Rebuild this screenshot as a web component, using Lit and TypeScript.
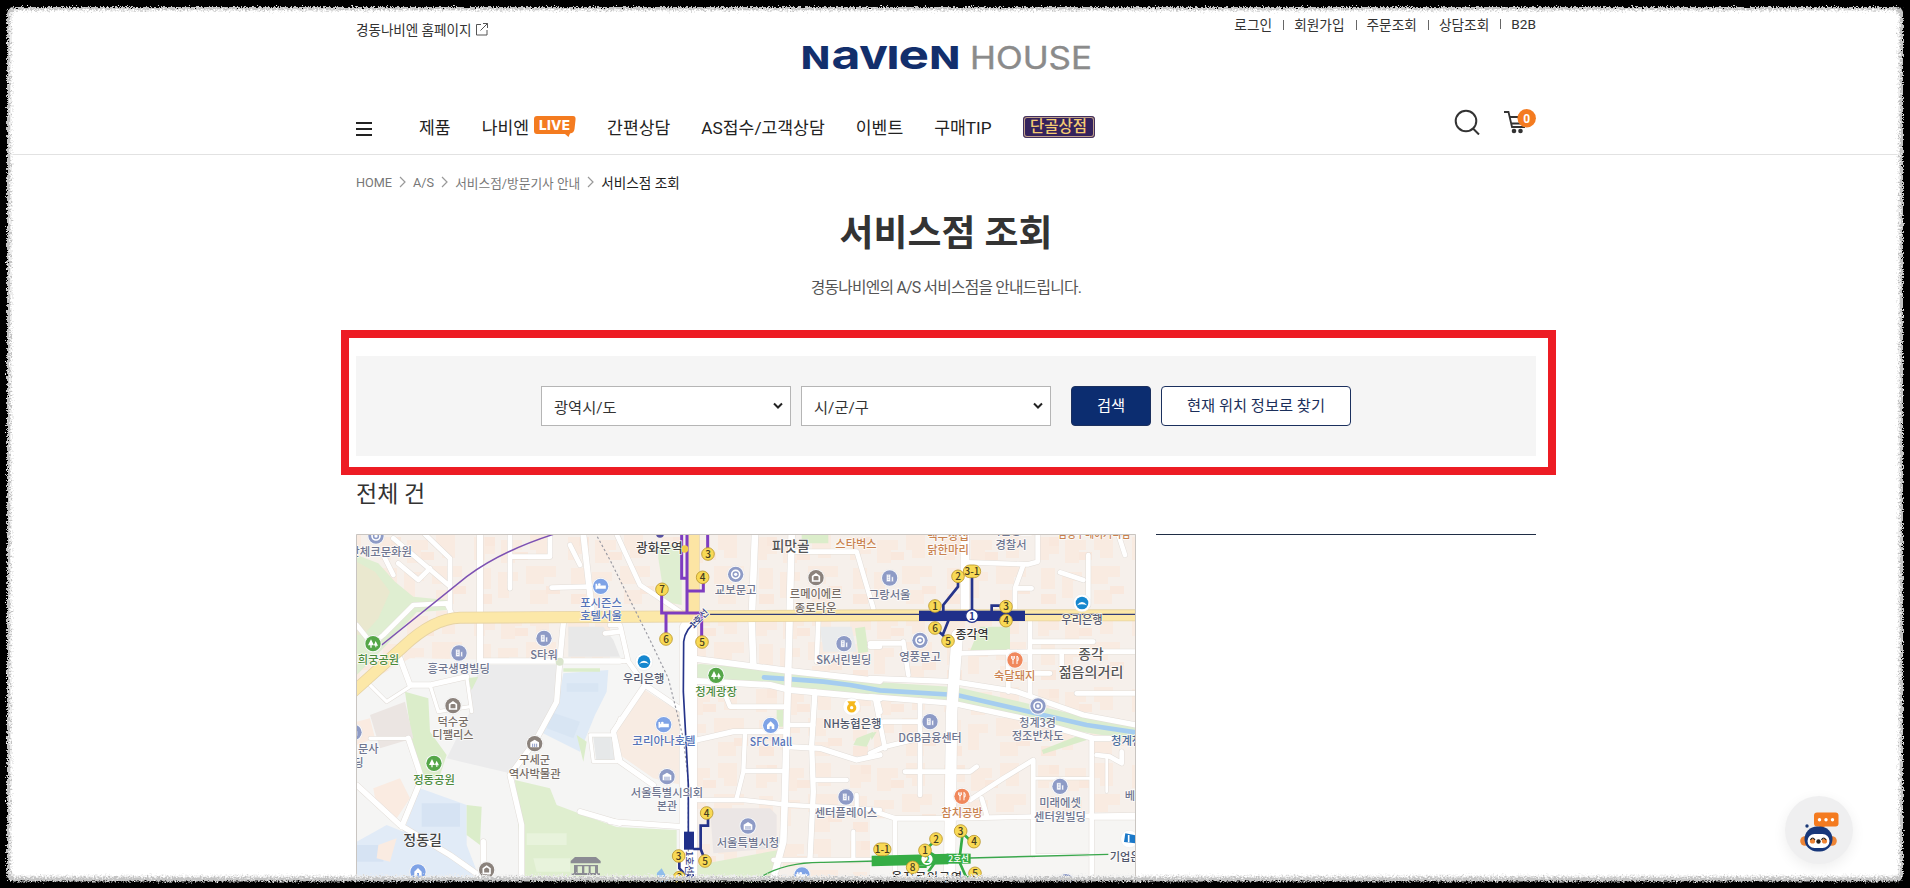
import { LitElement, html, css, svg } from "lit";
import { customElement } from "lit/decorators.js";

type Kind = "building" | "hotel" | "mall" | "park" | "museum" | "house" | "food" | "ring" | "bank" | "nh" | "ibk" | "none";
// Map tiles are authored on a 3x grid; each one is shifted by its own origin.
const ORIGIN: Record<string, number> = { a: 350, b: 610, c: 870 };
const tile = (t: string) => `translate(${ORIGIN[t]} 525) scale(.33333)`;

interface Place { t: string; k: Kind; x: number; y: number; c: string; s?: number; w?: number; lines: [string, number, number, number?][]; }

const SLATE = "#6f7690", BROWN = "#776d66", GREEN = "#4b8a3c", BLUE = "#5674b8", ORANGE = "#c9824f", DARK = "#444";

const PLACES: Place[] = [
  { t: "a", k: "ring", x: 78, y: 33, c: SLATE, lines: [["단체코문화원", 92, 92, 188]] },
  { t: "a", k: "hotel", x: 752, y: 184, c: BLUE, lines: [["포시즌스", 753, 245, 125], ["호텔서울", 753, 285, 125]] },
  { t: "a", k: "park", x: 69, y: 356, c: GREEN, lines: [["경희궁공원", 70, 418, 155]] },
  { t: "a", k: "building", x: 327, y: 384, c: SLATE, lines: [["흥국생명빌딩", 326, 445, 187]] },
  { t: "a", k: "building", x: 582, y: 340, c: SLATE, lines: [["S타워", 582, 402, 82]] },
  { t: "a", k: "house", x: 309, y: 542, c: BROWN, lines: [["덕수궁", 309, 603, 93], ["디팰리스", 309, 643, 124]] },
  { t: "a", k: "museum", x: 554, y: 656, c: BROWN, lines: [["구세군", 554, 717, 93], ["역사박물관", 554, 758, 156]] },
  { t: "a", k: "park", x: 252, y: 715, c: GREEN, lines: [["정동공원", 252, 777, 125]] },
  { t: "a", k: "building", x: 12, y: 622, c: SLATE, lines: [["문사", 55, 683, 62], ["딩", 25, 725, 31]] },
  { t: "a", k: "none", x: 0, y: 0, c: DARK, s: 42, lines: [["정동길", 218, 961, 116]] },
  { t: "a", k: "mall", x: 204, y: 1041, c: BLUE, lines: [] },
  { t: "a", k: "house", x: 410, y: 1035, c: BROWN, lines: [] },
  { t: "b", k: "none", x: 0, y: 0, c: DARK, s: 38, lines: [["광화문역", 148, 80, 140]] },
  { t: "b", k: "none", x: 0, y: 0, c: "#555", s: 42, lines: [["피맛골", 542, 78, 114]] },
  { t: "b", k: "none", x: 0, y: 0, c: ORANGE, lines: [["스타벅스", 738, 70, 124]] },
  { t: "b", k: "ring", x: 377, y: 148, c: SLATE, lines: [["교보문고", 377, 208, 125]] },
  { t: "b", k: "house", x: 618, y: 158, c: BROWN, lines: [["르메이에르", 617, 219, 155], ["종로타운", 617, 261, 125]] },
  { t: "b", k: "building", x: 702, y: 356, c: SLATE, lines: [["SK서린빌딩", 701, 417, 165]] },
  { t: "b", k: "bank", x: 102, y: 410, c: "#555a70", lines: [["우리은행", 101, 473, 124]] },
  { t: "b", k: "park", x: 318, y: 451, c: GREEN, lines: [["청계광장", 318, 513, 125]] },
  { t: "b", k: "nh", x: 725, y: 545, c: "#50576b", lines: [["NH농협은행", 727, 609, 175]] },
  { t: "b", k: "hotel", x: 161, y: 599, c: BLUE, lines: [["코리아나호텔", 162, 660, 190]] },
  { t: "b", k: "mall", x: 482, y: 601, c: BLUE, lines: [["SFC Mall", 483, 662, 127]] },
  { t: "b", k: "museum", x: 171, y: 755, c: SLATE, lines: [["서울특별시의회", 171, 815, 217], ["본관", 171, 856, 60]] },
  { t: "b", k: "building", x: 708, y: 816, c: SLATE, lines: [["센터플레이스", 708, 877, 188]] },
  { t: "b", k: "museum", x: 414, y: 903, c: SLATE, lines: [["서울특별시청", 414, 965, 188]] },
  { t: "b", k: "hotel", x: 576, y: 1050, c: BLUE, lines: [] },
  { t: "c", k: "none", x: 0, y: 0, c: ORANGE, lines: [["백부장집", 234, 46, 125], ["닭한마리", 234, 87, 125]] },
  { t: "c", k: "none", x: 0, y: 0, c: SLATE, lines: [["서울종로", 423, 30, 124], ["경찰서", 423, 71, 93]] },
  { t: "c", k: "none", x: 0, y: 0, c: ORANGE, lines: [["김영주베이커리점", 672, 38, 218]] },
  { t: "c", k: "building", x: 59, y: 159, c: SLATE, lines: [["그랑서울", 59, 221, 125]] },
  { t: "c", k: "ring", x: 150, y: 346, c: SLATE, lines: [["영풍문고", 150, 407, 125]] },
  { t: "c", k: "bank", x: 636, y: 234, c: "#555a70", lines: [["우리은행", 636, 298, 124]] },
  { t: "c", k: "none", x: 0, y: 0, c: "#555", s: 40, lines: [["종각", 663, 403, 76], ["젊음의거리", 663, 456, 194]] },
  { t: "c", k: "food", x: 435, y: 405, c: ORANGE, lines: [["숙달돼지", 434, 466, 124]] },
  { t: "c", k: "ring", x: 504, y: 543, c: SLATE, lines: [["청계3경", 503, 605, 110], ["정조반차도", 503, 646, 156]] },
  { t: "c", k: "building", x: 180, y: 590, c: SLATE, lines: [["DGB금융센터", 180, 650, 190]] },
  { t: "c", k: "none", x: 0, y: 0, c: "#4a6d9c", lines: [["청계천", 770, 659, 94]] },
  { t: "c", k: "food", x: 276, y: 814, c: ORANGE, lines: [["참치공방", 276, 875, 124]] },
  { t: "c", k: "building", x: 570, y: 784, c: SLATE, lines: [["미래에셋", 570, 845, 125], ["센터원빌딩", 570, 887, 156]] },
  { t: "c", k: "none", x: 0, y: 0, c: SLATE, lines: [["베어", 795, 826, 62]] },
  { t: "c", k: "ibk", x: 778, y: 942, c: "#50576b", lines: [["기업은행", 781, 1007, 124]] },
  { t: "c", k: "building", x: 588, y: 1070, c: BLUE, lines: [] },
];

const AREAS: [string, string, string][] = [
  ["a", "#f5f5f4", "M20 490L180 400L810 410V1089H20Z"],
  ["b", "#f6f6f5", "M0 290H215V1089H0Z"],
  ["c", "#f6f5f3", "M0 880H797V1089H0Z"],
  ["b", "#f8ece3", "M105 495L215 565V780L130 760L30 690L20 620Z"],
  ["a", "#dfeed1", "M20 90L85 115L135 170L190 215L290 225V255L200 262L100 370L20 450Z"],
  ["a", "#eae8cf", "M20 110L75 140L120 200L85 280L40 330L20 330Z"],
  ["a", "#ebebec", "M395 420H620V520L560 640L480 745L290 700L360 560V500Z"],
  ["a", "#e8e8e8", "M655 305H760L790 345L810 395H655Z"],
  ["a", "#dfeaf6", "M640 445L775 435L770 500L735 570L690 680L570 620L625 530Z"],
  ["a", "#d8e5f3", "M650 475H745V500H650ZM600 560L690 590L670 640L590 610Z"],
  ["a", "#e1ebf7", "M210 790L350 840V960L400 1089H20V950L110 900L160 920Z"],
  ["a", "#d6e3f3", "M215 835H330V905H215ZM20 960H100V1010H20Z"],
  ["a", "#dbedca", "M165 500L235 520L240 620L290 690L270 750L215 780L185 640Z"],
  ["a", "#dbedca", "M350 840L395 845L390 960L350 930ZM350 460L385 455L365 495Z"],
  ["a", "#dfeecf", "M495 765L600 790L620 840L700 870L810 910V1089H520Z"],
  ["a", "#e8f3dc", "M530 925H650V960H530ZM550 1000H660V1040H560Z"],
  ["a", "#ebe5e2", "M60 570L165 530L190 640L90 670Z"],
  ["a", "#faebe1", "M20 590L60 580L75 640L20 660ZM70 790L150 760L180 820L140 880L80 850ZM85 960L140 940L120 1010L80 1000Z"],
  ["a", "#dbedca", "M680 630L710 650L700 710ZM640 430H750V440H640Z"],
  ["a", "#e6e8e9", "M730 635H790L800 700L740 715Z"],
  ["b", "#dfeed1", "M145 100V60H215V240L165 230Z"],
  ["b", "#dbedca", "M575 28H655V55H575ZM735 310L765 305L775 380L745 385ZM500 555H520V605H500ZM740 640L790 620L770 665L730 660Z"],
  ["b", "#e9ebec", "M630 305H725L740 380H640ZM0 610L20 690L0 710Z"],
  ["b", "#dfeecf", "M0 905L200 915V1089H0ZM262 1020L505 975L480 1089H262Z"],
  ["b", "#ebe6e5", "M300 850L480 850L500 870V970L310 985Z"],
  ["c", "#d9ecc9", "M330 305H420V375L300 378ZM515 675L630 630L650 645L520 687ZM0 625L20 620L5 645Z"],
];

const ROADS: [string, number, string][] = [
  ["a", 18, "M390 28V420M700 28L725 250"],
  ["a", 14, "M300 265V100L225 28M480 28V190M480 95H600V28M305 265L290 235L190 240L100 330L75 350M605 188L720 185M660 60L690 120M130 40L295 180M145 115L205 165L240 130M100 90L130 150M810 320L765 325M20 300L60 350"],
  ["a", 16, "M640 295L630 400L620 530L555 650L480 750L515 900V1089M390 408H810M150 400L180 480H240L350 455"],
  ["a", 10, "M350 455L365 560M60 480L110 530L180 485M240 480L265 560M720 630H790L800 710H730ZM810 580L790 630M60 640L175 640M265 560L360 545"],
  ["a", 16, "M20 780L150 900L300 990L400 1060M175 640L215 760L155 905M400 950V1060M690 860L810 895"],
  ["b", 20, "M435 28L425 290L430 420M545 28L535 430L525 800L520 950L490 1060"],
  ["b", 14, "M0 408H45M0 300L30 300L55 410L105 480M20 28L90 180L210 260M560 80H740L790 250M625 290L620 410M340 495L360 545H530M530 600H610M810 365H780"],
  ["b", 18, "M260 402L540 438L810 468M260 468L480 480L540 495L810 520"],
  ["b", 16, "M105 480L10 620L30 710L130 780M105 480L230 565M0 890L215 905M260 645L370 620H530M615 500L605 660L610 800L600 1000M530 665L630 670L740 705L810 690M800 520L810 560"],
  ["b", 13, "M405 630L400 740L380 820M400 738H525M262 825H400L540 840L810 855M610 765H710M490 1005H790M730 920V1000M740 860V810"],
  ["b", 52, "M235 310V1089"],
  ["c", 34, "M262 330L245 560L238 1089"],
  ["c", 26, "M285 28V250"],
  ["c", 14, "M290 112L475 118L503 110V28M460 120L435 190V250M435 190H485M570 142L640 165M655 90V240M745 28L765 90M480 290V510M480 350H670M480 380H797M265 385L480 380M480 445H540M620 505H797M575 380V440M415 380V500"],
  ["c", 16, "M0 460L250 470L440 500L640 570L797 600M0 515L250 535L460 580L670 640L720 640"],
  ["c", 14, "M150 525V810M15 520L45 670M0 685L45 665L150 640M40 590H150M105 740H300L320 725M300 825L400 760L490 705V990M665 640V1089M680 690L720 695L755 715V680M0 855L75 880H240L500 875L797 870M335 820L350 870M75 880V1060M100 350L115 450M0 355H100"],
  ["c", 8, "M490 760H665M490 990H665M670 880H797M710 695V800"],
];

const EXITS: [string, number, number, string, number?][] = [
  ["b", 294, 87, "3"], ["b", 278, 157, "4"], ["b", 156, 193, "7"], ["b", 168, 342, "6"], ["b", 276, 351, "5"],
  ["b", 290, 864, "4"], ["b", 206, 993, "3"], ["b", 285, 1008, "5"], ["b", 208, 1058, "2"],
  ["c", 264, 154, "2"], ["c", 306, 139, "3-1", 52], ["c", 195, 243, "1"], ["c", 408, 245, "3"], ["c", 408, 287, "4"],
  ["c", 195, 309, "6"], ["c", 234, 348, "5"], ["c", 272, 918, "3"], ["c", 312, 950, "4"], ["c", 198, 942, "2"],
  ["c", 165, 976, "1"], ["c", 37, 973, "1-1", 52], ["c", 128, 1027, "8"], ["c", 315, 1045, "5"],
];

const PIN: Record<Kind, string> = {
  building: "#8e9bc6", hotel: "#7fa3e6", mall: "#7fa3e6", park: "#55a648", museum: "#8e9bc6", house: "#8b827c",
  food: "#f0885c", ring: "#8e9bc6", bank: "#fff", nh: "#fff", ibk: "#fff", none: "",
};

const glyph = (k: Kind) => {
  switch (k) {
    case "building": return svg`<path d="M-10 11V-11H3V11ZM5 -4H11V11H5ZM-6 -6H-1M-6 -1H-1M-6 4H-1" fill="#fff" stroke="#8e9bc6" stroke-width="2"/>`;
    case "hotel": return svg`<path d="M-13 -8V9M-13 5H13V0H-13" stroke="#fff" stroke-width="5" fill="none"/><circle cx="-4" cy="-5" r="4" fill="#fff"/>`;
    case "mall": return svg`<path d="M-11 11V-1L0 -12L11 -1V11Z" fill="#fff"/><path d="M-3 11V3H3V11" fill="#7fa3e6"/>`;
    case "park": return svg`<path d="M-6 -13L-15 5H-8V12H-4V5H3ZM8 -8L3 3L5 6H7V11H10V6H15Z" fill="#fff"/>`;
    case "museum": return svg`<path d="M-13 -4L0 -12L13 -4V11H-13Z" fill="#fff"/><path d="M-6 0V10M0 0V10M6 0V10" stroke="#8e9bc6" stroke-width="3"/>`;
    case "house": return svg`<path d="M-10 10V-4L0 -11L10 -4V10Z" fill="none" stroke="#fff" stroke-width="5"/>`;
    case "food": return svg`<path d="M-6 -12V12M-10 -12V-4Q-6 2 -2 -4V-12M6 12V-12Q12 -8 9 2H6" stroke="#fff" stroke-width="3" fill="none"/>`;
    case "ring": return svg`<circle r="12" fill="none" stroke="#fff" stroke-width="5"/><circle r="5" fill="#fff"/>`;
    case "bank": return svg`<circle r="19" fill="#1687cf"/><path d="M-15 7Q0 -13 15 7Q0 0 -15 7Z" fill="#fff"/>`;
    case "nh": return svg`<path d="M-13 -16H13L8 -8A14 14 0 1 1 -8 -8Z" fill="#f5b81c"/><circle cy="3" r="5" fill="#fff"/>`;
    case "ibk": return svg`<path d="M-12 -17L18 -11V13L-16 9Z" fill="#1a78c8"/><path d="M-2 -12V10" stroke="#fff" stroke-width="5"/>`;
    default: return "";
  }
};

@customElement("station-map")
class StationMap extends LitElement {
  static styles = css`
    :host { display: block; }
    svg { display: block; }
    text { font-family: "Noto Sans CJK KR", sans-serif; }
    .label { font-weight: 500; paint-order: stroke; stroke: #fff; stroke-width: 5px; stroke-opacity: .8; stroke-linejoin: round; text-anchor: middle; }
    .num { font-weight: 500; font-size: 30px; text-anchor: middle; fill: #443c20; }
    .road { fill: none; stroke-linejoin: round; stroke-linecap: round; }
  `;
  render() {
    const line = (t: string, d: string, c: string, w: number) => svg`<path class="road" transform=${tile(t)} d=${d} stroke=${c} stroke-width=${w}/>`;
    return html`<svg width="780" height="354" viewBox="356 534 780 354">
      <defs>
        <pattern id="blocks" width="94" height="76" patternUnits="userSpaceOnUse">
          <rect width="94" height="76" fill="#f6f0eb"/>
          <path d="M4 5H25V22H15V28H4ZM31 8H52V18H45V31H31ZM60 3H79V26H66V18H60ZM7 36H21V57H7ZM28 40H48V49H39V66H28ZM56 34H86V45H74V52H56ZM60 58H78V72H60Z" fill="#f9ebe1"/>
          <path d="M15 5H25V14H15ZM45 20H58V28H45ZM76 54H90V62H76ZM7 62H22V72H7Z" fill="#f9e8dd"/>
        </pattern>
      </defs>
      <rect x="356" y="534" width="780" height="354" fill="url(#blocks)"/>
      ${AREAS.map(([t, c, d]) => svg`<path transform=${tile(t)} fill=${c} d=${d}/>`)}
      ${line("b", "M270 440L540 462L810 495L1040 510L1270 563L1430 600L1577 622", "#dcedd0", 46)}
      ${line("b", "M462 457L560 464L640 470L720 480L810 496L1040 510L1270 563L1430 600L1577 622", "#a5cdf0", 14)}
      ${ROADS.map(([t, w, d]) => line(t, d, "#e2ddd8", w + 3))}
      ${ROADS.map(([t, w, d]) => line(t, d, "#ffffff", w))}
      ${line("a", "M10 500L160 365Q250 280 330 278L1600 271H2380", "#e6d3a4", 36)}
      ${line("b", "M252 10V270", "#e6d3a4", 34)}
      ${line("a", "M10 500L160 365Q250 280 330 278L1600 271H2380", "#fce8a8", 31)}
      ${line("b", "M252 10V270", "#fce5a4", 30)}
      <g transform=${tile("a")}>
        <path d="M95 360L350 155Q450 80 610 28" fill="none" stroke="#7d51b3" stroke-width="4.5"/>
        <circle cx="629" cy="410" r="12" fill="#d9e4cc"/>
        <path d="M662 1008L675 996H738L752 1008V1015H662ZM672 1020H744V1045H672ZM664 1045H750V1050H664Z" fill="#8b8b93"/>
        <path d="M683 1024H696V1044H683ZM703 1024H716V1044H703ZM722 1024H735V1044H722Z" fill="#dfeecf"/>
      </g>
      <g transform=${tile("b")} fill="none">
        <path d="M-38 35L0 105L120 345L175 460L220 640L235 770V1089" stroke="#9a9aa2" stroke-width="3.5" stroke-dasharray="7 7"/>
        <path d="M215 28V160H231M231 28V265M234 198H280V155M293 28V85M155 195V264H275V345M168 264V340" stroke="#7e3cc0" stroke-width="9"/>
        <path d="M300 268H1577" stroke="#333d78" stroke-width="4"/>
        <path d="M268 282Q225 310 221 350L220 500L235 780V925" stroke="#26348a" stroke-width="5"/>
        <path d="M294 865V902H272V972H250M272 972L285 1005M208 995V1030L235 1058" stroke="#26348a" stroke-width="8"/>
        <rect x="222" y="920" width="30" height="54" fill="#20308a"/><rect x="228" y="1048" width="24" height="42" fill="#20308a"/>
        <path d="M420 1080Q500 1010 640 1012L800 1008" stroke="#3aa74c" stroke-width="4"/>
        <path d="M140 1045L155 1030L180 1075H145Z" fill="#8fbdeb"/>
        <circle cx="150" cy="26" r="12" fill="#5751a0"/><circle cx="224" cy="72" r="11" fill="#f0cc4b"/>
        <g transform="translate(274 288) rotate(-45)"><text class="label" fill="#344184" font-size="28">1호선</text></g>
        <g transform="translate(228 1012) rotate(90)"><text class="label" fill="#344184" font-size="28">1호선</text></g>
      </g>
      <g transform=${tile("c")} fill="none">
        <path d="M264 160V185L220 240V260M306 155V260M408 242H365V260M236 285L218 330L195 310M218 330L234 345" stroke="#26348a" stroke-width="8"/>
        <rect x="147" y="257" width="318" height="31" fill="#20308a"/>
        <circle cx="306" cy="273" r="19" fill="#fff" stroke="#20308a" stroke-width="4"/>
        <path d="M270 990L278 925L310 955M198 945L165 975M175 980L205 998L175 1040M268 1010L290 1060L312 1045M130 1025H170" stroke="#35ab45" stroke-width="8"/>
        <path d="M5 992L235 986V1018L5 1024Z" fill="#35ad45"/>
        <path d="M300 999L715 988" stroke="#3aa74c" stroke-width="4"/>
        <circle cx="171" cy="1003" r="19" fill="#fff" stroke="#35ad45" stroke-width="4"/>
        <rect x="230" y="986" width="72" height="30" fill="#35ad45"/>
        <text x="266" y="1011" text-anchor="middle" font-size="26" fill="#fff" font-weight="500">2호선</text>
        <text x="306" y="284" text-anchor="middle" font-size="30" fill="#26348a" font-weight="700">1</text>
        <text x="171" y="1013" text-anchor="middle" font-size="28" fill="#35ad45" font-weight="700">2</text>
        <text class="label" x="306" y="341" font-size="36" fill="#333">종각역</text>
      </g>
      ${PLACES.map((p) => svg`<g transform=${tile(p.t)}>
        ${p.k === "none" ? "" : svg`<g transform="translate(${p.x} ${p.y})"><circle r="26" fill="#fff" stroke="#ddd" stroke-width="1"/><circle r="23" fill=${p.k === "museum" && p.c === BROWN ? "#8b827c" : PIN[p.k]}/>${glyph(p.k)}</g>`}
        ${p.lines.map(([s, x, y, w]) => svg`<text class="label" x=${x} y=${y} fill=${p.c} font-size=${p.s ?? 34} textLength=${w ?? 100} lengthAdjust="spacingAndGlyphs">${s}</text>`)}
      </g>`)}
      <g transform=${tile("c")}><text class="label" x="170" y="1070" font-size="36" fill="#333" textLength="212">을지로입구역</text></g>
      ${EXITS.map(([t, x, y, n, w]) => svg`<g transform=${tile(t)}>
        <rect x=${x - (w ?? 38) / 2} y=${y - 19} width=${w ?? 38} height="38" rx="19" fill="#f8d955" stroke="#b9962e" stroke-width="2.5"/>
        <text class="num" x=${x} y=${y + 11}>${n}</text></g>`)}
      <path d="M356.500 888V534.500H1135.500V888" fill="none" stroke="#c9c5c1"/>
    </svg>`;
  }
}

@customElement("torn-frame")
class TornFrame extends LitElement {
  static styles = css`:host, svg { display: block; width: 1910px; height: 888px; }`;
  render() {
    return html`<svg viewBox="0 0 1910 888">
      <defs>
        <filter id="soft" filterUnits="userSpaceOnUse" x="0" y="0" width="1910" height="888">
          <feTurbulence type="fractalNoise" baseFrequency=".55" numOctaves="2" seed="4"/>
          <feDisplacementMap in="SourceGraphic" scale="9" xChannelSelector="R" yChannelSelector="G"/>
        </filter>
        <filter id="rough" filterUnits="userSpaceOnUse" x="-20" y="-20" width="1950" height="928">
          <feTurbulence type="fractalNoise" baseFrequency=".6" numOctaves="2" seed="9"/>
          <feDisplacementMap in="SourceGraphic" scale="6" xChannelSelector="R" yChannelSelector="G"/>
        </filter>
      </defs>
      <g fill="none" filter="url(#soft)">
        <rect x="9" y="8" width="1892" height="870.500" rx="8" stroke="#ededed" stroke-width="6"/>
        <rect x="7.500" y="7" width="1895" height="873" rx="8" stroke="#c4c4c4" stroke-width="5"/>
      </g>
      <path filter="url(#rough)" fill-rule="evenodd" d="M-20 -20H1930V908H-20ZM14 7H1896Q1903 7 1903 14V874Q1903 881.500 1896 881.500H14Q7 881.500 7 874V14Q7 7 14 7Z"/>
    </svg>`;
  }
}

@customElement("app-root")
class AppRoot extends LitElement {
  static styles = css`
    * { box-sizing: border-box; }
    :host { display: block; position: relative; width: 1910px; height: 888px; overflow: hidden; background: #fff; color: #333; font-family: Roboto, "Noto Sans CJK KR", sans-serif; }
    .wrap { width: 1180px; margin-left: 356px; }
    header { height: 155px; border-bottom: 1px solid #e2e2e2; }
    .top { display: grid; grid-template-columns: 1fr 290px 1fr; height: 103px; }
    .home { display: flex; align-items: center; gap: 4px; height: 20px; margin-top: 19px; font-size: 13.600px; letter-spacing: -.05px; white-space: nowrap; }
    .logo { display: block; margin-top: 37px; }
    .links { display: flex; justify-content: flex-end; align-items: center; height: 20px; margin-top: 14px; font-size: 13.700px; white-space: nowrap; }
    .links span + span { margin-left: 11px; padding-left: 11px; background: linear-gradient(#666, #666) 0 55% / 1px 10px no-repeat; }
    nav { display: flex; align-items: center; height: 46px; font-size: 17.200px; white-space: nowrap; color: #222; font-weight: 400; }
    .menu { display: grid; gap: 4px; width: 16px; margin: 6px 47px 0 0; }
    .menu i { height: 2px; background: #222; }
    .item { display: flex; align-items: center; margin-right: 31px; }
    .live { margin-left: 5px; }
    .shop { display: grid; place-items: center; width: 72px; height: 22px; margin-top: 2px; border-radius: 4px; background: #34225c; box-shadow: inset 0 0 0 1px #41305f, inset 0 0 0 2px #c1a18c; color: #f3cb73; font-size: 15.500px; line-height: 18px; font-weight: 500; }
    .tools { display: flex; align-items: center; gap: 24px; margin: -8px 0 0 auto; }
    .crumbs { display: flex; align-items: center; gap: 7px; height: 20px; margin-top: 17px; font-size: 12.700px; color: #777; }
    .crumbs b { font-weight: 400; color: #222; font-size: 13.600px; }
    h1 { margin: 15px 0 0; height: 54px; line-height: 54px; font-size: 36.900px; font-weight: 700; text-align: center; color: #333; }
    .lead { height: 24px; line-height: 24px; margin: 15px 0 0; text-align: center; font-size: 15.800px; letter-spacing: -.78px; color: #555; }
    .callout { width: 1215px; height: 145px; margin: 30px 0 0 341px; padding: 18px 12px 0 7px; border: 8px solid #ed1c24; }
    .search { display: flex; align-items: center; justify-content: center; gap: 10px; height: 100px; background: #f5f5f5; padding-right: 0; }
    .select { display: flex; align-items: center; justify-content: space-between; width: 250px; height: 40px; padding: 0 7px 1px 12px; border: 1px solid #b5b5b5; background: #fff; font-size: 15.300px; color: #333; }
    button { height: 40px; padding: 0 0 4px; border: 1px solid #1b305e; border-radius: 4px; font: 400 15.300px Roboto, "Noto Sans CJK KR", sans-serif; }
    .go { width: 80px; margin-left: 10px; background: #0c2d70; color: #fff; }
    .near { width: 190px; background: #fff; color: #1b2f5b; }
    .count { height: 36px; line-height: 39px; font-size: 23px; margin-bottom: 23px; }
    .result { display: grid; grid-template-columns: 780px 380px; gap: 20px; }
    .list { border-top: 1px solid #1f2d45; }
    .bot { position: absolute; left: 1785px; top: 796px; width: 68px; height: 68px; border-radius: 50%; background: #efeff0; box-shadow: 0 4px 14px rgba(0, 0, 0, .07); }
    .frame { position: absolute; left: 0; top: 0; pointer-events: none; }
  `;
  render() {
    const sep = html`<svg width="7" height="12" viewBox="0 0 7 12"><path d="M1 1l5 5-5 5" fill="none" stroke="#999" stroke-width="1.200"/></svg>`;
    const arrow = html`<svg width="10" height="8" viewBox="0 0 10 8"><path d="M1 1.500l4 4 4-4" fill="none" stroke="#222" stroke-width="2"/></svg>`;
    const letter = (s: string, x: number, w: number, size: number, weight: number, fill: string) =>
      svg`<text x=${x} y="32" font-family="Inter" font-size=${size} font-weight=${weight} fill=${fill} textLength=${w} lengthAdjust="spacingAndGlyphs">${s}</text>`;
    return html`
      <header><div class="wrap">
        <div class="top">
          <div class="home">경동나비엔 홈페이지 <svg width="13" height="13" viewBox="0 0 13 13" fill="none" stroke="#555"><path d="M6 1.500H1.500V12H12V7M8 .500H12.500V5M12.500 .500L5.500 7.500"/></svg></div>
          <svg class="logo" width="290" height="40" viewBox="801 38 290 40"><g transform="translate(0 38)">
            ${letter("N", 801, 29, 31.4, 800, "#132f6c")}${letter("a", 831.5, 29, 40, 700, "#132f6c")}${letter("V", 859, 29, 31.4, 800, "#132f6c")}
            ${letter("I", 887, 12, 31.4, 800, "#132f6c")}${letter("e", 898.5, 30.5, 40, 700, "#132f6c")}${letter("N", 929.5, 30.5, 31.4, 800, "#132f6c")}
            <g stroke="#8b8b8b" stroke-width=".4">${letter("HOUSE", 970, 122, 31.4, 400, "#8b8b8b")}</g>
          </g></svg>
          <div class="links"><span>로그인</span><span>회원가입</span><span>주문조회</span><span>상담조회</span><span>B2B</span></div>
        </div>
        <nav>
          <div class="menu"><i></i><i></i><i></i></div>
          <span class="item">제품</span>
          <span class="item">나비엔<svg class="live" width="42" height="22" viewBox="0 0 42 22"><path d="M3 1H39Q42 1 41.500 5L40.500 14Q40 18 36 18.500L34.500 22L31 19H3Q0 19 0 16V4Q0 1 3 1Z" fill="#f47b20"/><text x="5" y="15" font-family="Inter" font-size="13.500" font-weight="800" fill="#fff" textLength="31">LIVE</text></svg></span>
          <span class="item">간편상담</span><span class="item">AS접수/고객상담</span><span class="item">이벤트</span><span class="item">구매TIP</span>
          <span class="shop">단골상점</span>
          <div class="tools">
            <svg width="26" height="26" viewBox="0 0 26 26" fill="none" stroke="#333" stroke-width="2"><circle cx="12" cy="12" r="10.300"/><path d="M19 19.500L25 25.500"/></svg>
            <svg width="32" height="26" viewBox="0 0 32 26"><g fill="none" stroke="#333" stroke-width="1.800"><path d="M0 3H4.500L8 18H21M5.500 8H20M7 14.500H20"/></g><circle cx="10" cy="22" r="2.300" fill="#333"/><circle cx="16.500" cy="22" r="2.300" fill="#333"/><circle cx="22.700" cy="9.200" r="9.200" fill="#f47b20"/><text x="22.700" y="13.500" text-anchor="middle" font-family="Roboto" font-size="12" font-weight="700" fill="#fff">0</text></svg>
          </div>
        </nav>
      </div></header>
      <div class="wrap">
        <div class="crumbs">HOME ${sep} A/S ${sep} 서비스점/방문기사 안내 ${sep} <b>서비스점 조회</b></div>
        <h1>서비스점 조회</h1>
        <p class="lead">경동나비엔의 A/S 서비스점을 안내드립니다.</p>
      </div>
      <section class="callout"><div class="search">
        <div class="select">광역시/도 ${arrow}</div><div class="select">시/군/구 ${arrow}</div>
        <button class="go">검색</button><button class="near">현재 위치 정보로 찾기</button>
      </div></section>
      <main class="wrap">
        <div class="count">전체 건</div>
        <div class="result"><station-map></station-map><div class="list"></div></div>
      </main>
      <svg class="bot" viewBox="0 0 68 68">
        <rect x="29" y="16.500" width="24.500" height="14" rx="3" fill="#f47b20"/><path d="M34 30L37 33L40 30Z" fill="#f47b20"/>
        <g fill="#fff"><circle cx="34.500" cy="23.700" r="1.700"/><circle cx="41" cy="23.700" r="1.700"/><circle cx="47.500" cy="23.700" r="1.700"/></g>
        <circle cx="22" cy="30" r="1.700" fill="#1b3a78"/>
        <circle cx="20" cy="45" r="4.800" fill="#ee8535"/><circle cx="47" cy="45" r="4.800" fill="#ee8535"/>
        <rect x="19.500" y="30.500" width="28" height="25" rx="12.500" fill="#17377a"/><rect x="22.500" y="38" width="22" height="14" rx="7" fill="#fff"/>
        <circle cx="27.500" cy="45" r="2.600" fill="#ee8535"/><circle cx="39.500" cy="45" r="2.600" fill="#ee8535"/><path d="M25.500 44q2-4 4.500 0M36.500 44q2-4 4.500 0" fill="none" stroke="#222" stroke-width="1.200"/><circle cx="33.500" cy="45.500" r="2.200" fill="#222"/>
      </svg>
      <torn-frame class="frame"></torn-frame>`;
  }
}
